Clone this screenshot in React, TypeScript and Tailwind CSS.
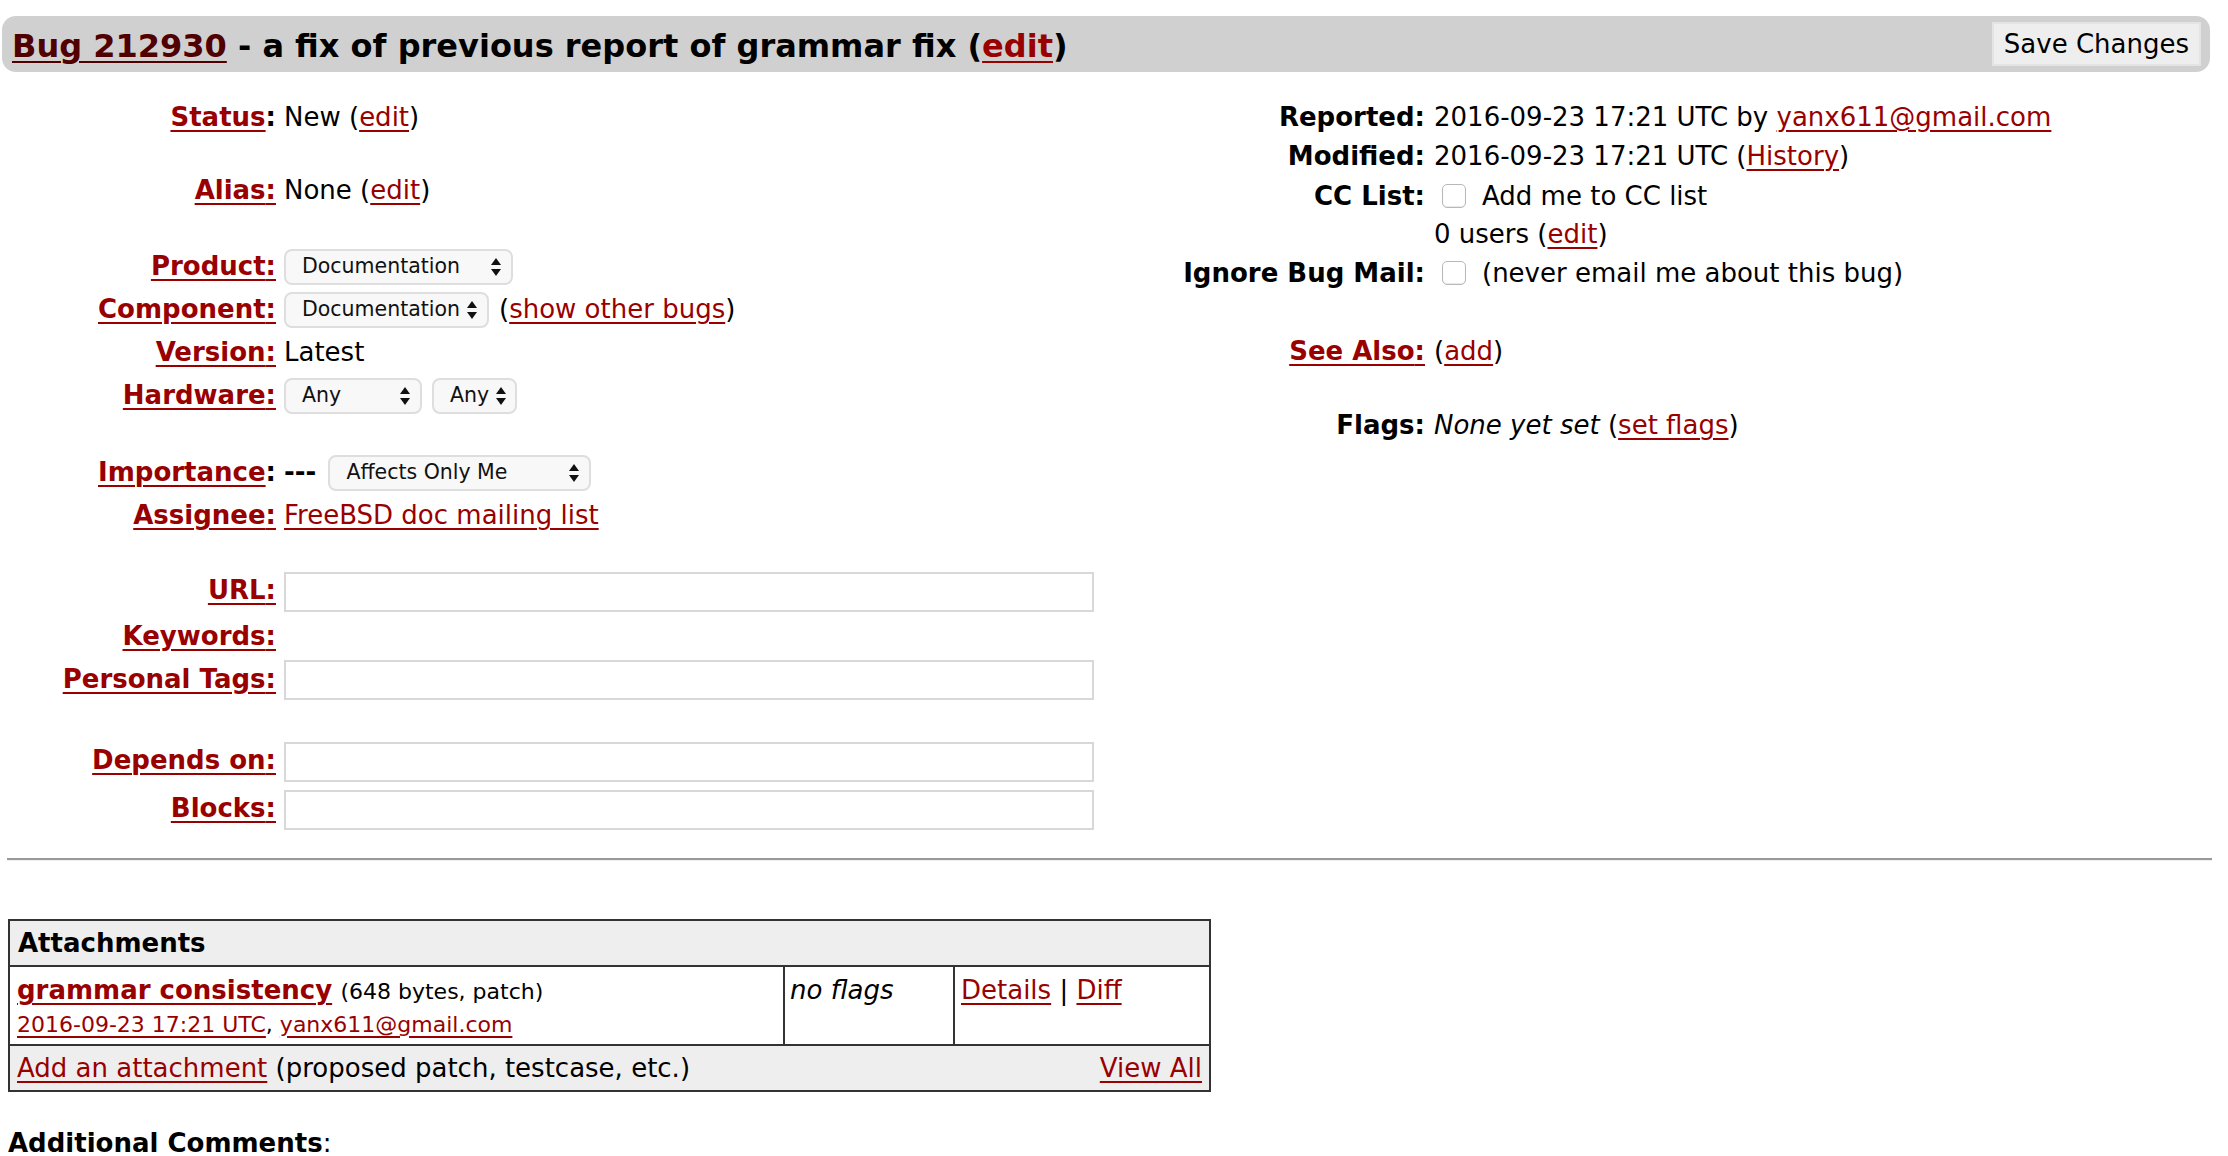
import React from 'react'

const red = 'text-[#990000] underline decoration-2 underline-offset-[4px]'

function Arrows() {
  return (
    <svg width="12" height="20" viewBox="0 0 12 20" className="shrink-0">
      <path d="M6 1 L11 8 H1 Z" fill="#111" />
      <path d="M6 19 L11 12 H1 Z" fill="#111" />
    </svg>
  )
}

function Select({ label, w }: { label: string; w: string }) {
  return (
    <span
      className={`inline-flex h-[36px] items-center justify-between gap-[6px] rounded-[8px] border-2 border-[#dedede] bg-[#f8f8f8] pl-[16px] pr-[9px] text-[20.5px] text-[#111] ${w}`}
    >
      <span>{label}</span>
      <Arrows />
    </span>
  )
}

function TextBox() {
  return <span className="block h-[40px] w-[810px] border-2 border-[#d8d8d8] bg-white" />
}

function Check() {
  return (
    <span className="ml-[8px] inline-block h-[24px] w-[24px] rounded-[5px] border border-[#b8b8b8] bg-white shadow-[inset_0_-1px_1px_#e8e8e8]" />
  )
}

function Row({ label, colon, children, cls }: { label: React.ReactNode; colon?: boolean; children?: React.ReactNode; cls: string }) {
  return (
    <div className={`flex items-center ${cls}`}>
      <div className="w-[276px] shrink-0 whitespace-nowrap text-right font-bold">
        {colon ? (
          <>
            <a className={red}>{label}</a>:
          </>
        ) : (
          <a className={red}>{label}:</a>
        )}
      </div>
      <div className="ml-[8px] flex items-center gap-[10px]">{children}</div>
    </div>
  )
}

function RRow({ label, link, children, cls }: { label: string; link?: boolean; children?: React.ReactNode; cls: string }) {
  return (
    <div className={`flex items-center ${cls}`}>
      <div className="w-[243px] shrink-0 whitespace-nowrap text-right font-bold">
        {link ? <a className={red}>{label}:</a> : <span>{label}:</span>}
      </div>
      <div className="ml-[9px] flex items-center whitespace-nowrap">{children}</div>
    </div>
  )
}

export default function App() {
  return (
    <div className="min-h-screen w-[2228px] bg-white text-[26px] text-black" style={{ fontFamily: '"DejaVu Sans", Verdana, sans-serif' }}>
      <div className="pt-[16px]">
        <div className="ml-[2px] flex h-[56px] w-[2208px] items-center justify-between rounded-[14px] bg-[#d0d0d0] pl-[10px] pr-[9px]">
          <div className="pt-[4px] text-[32px] font-bold">
            <a className="text-[#500000] underline decoration-2 underline-offset-[4px]">Bug 212930</a> - a fix of previous report of grammar fix (
            <a className={red}>edit</a>)
          </div>
          <button className="h-[44px] border-2 border-[#e4e4e4] bg-[#eeeeee] px-[10px] text-[26px]">Save Changes</button>
        </div>
      </div>

      <div className="flex">
        <div className="w-[1182px] shrink-0">
          <Row label="Status" colon cls="mt-[24px] h-[42px]">
            <span>
              New (<a className={red}>edit</a>)
            </span>
          </Row>
          <Row label="Alias" cls="mt-[31px] h-[42px]">
            <span>
              None (<a className={red}>edit</a>)
            </span>
          </Row>
          <Row label="Product" cls="mt-[34px] h-[43px]">
            <Select label="Documentation" w="w-[229px]" />
          </Row>
          <Row label="Component" cls="h-[43px]">
            <Select label="Documentation" w="w-[205px]" />
            <span>
              (<a className={red}>show other bugs</a>)
            </span>
          </Row>
          <Row label="Version" cls="h-[43px]">
            <span>Latest</span>
          </Row>
          <Row label="Hardware" cls="h-[43px]">
            <Select label="Any" w="w-[138px]" />
            <Select label="Any" w="w-[85px]" />
          </Row>
          <Row label="Importance" colon cls="mt-[34px] h-[43px]">
            <span className="mr-[2px] font-bold">---</span>
            <Select label="Affects Only Me" w="w-[263px]" />
          </Row>
          <Row label="Assignee" cls="h-[42px]">
            <a className={red}>FreeBSD doc mailing list</a>
          </Row>
          <Row label="URL" cls="mt-[34px] h-[44px] [&>div:first-child]:-mt-[4px]">
            <TextBox />
          </Row>
          <Row label="Keywords" cls="h-[44px]" />
          <Row label="Personal Tags" cls="h-[44px] [&>div:first-child]:-mt-[2px]">
            <TextBox />
          </Row>
          <Row label="Depends on" cls="mt-[38px] h-[44px] [&>div:first-child]:-mt-[4px]">
            <TextBox />
          </Row>
          <Row label="Blocks" cls="mt-[4px] h-[44px] [&>div:first-child]:-mt-[4px]">
            <TextBox />
          </Row>
        </div>

        <div className="flex-1">
          <RRow label="Reported" cls="mt-[25px] h-[40px]">
            <span>
              2016-09-23 17:21 UTC by <a className={red}>yanx611@gmail.com</a>
            </span>
          </RRow>
          <RRow label="Modified" cls="h-[38px]">
            <span>
              2016-09-23 17:21 UTC (<a className={red}>History</a>)
            </span>
          </RRow>
          <RRow label="CC List" cls="h-[42px]">
            <Check />
            <span className="ml-[16px]">Add me to CC list</span>
          </RRow>
          <div className="flex h-[34px] items-center pl-[252px]">
            <span>
              0 users (<a className={red}>edit</a>)
            </span>
          </div>
          <RRow label="Ignore Bug Mail" cls="h-[44px]">
            <Check />
            <span className="ml-[16px]">(never email me about this bug)</span>
          </RRow>
          <RRow label="See Also" link cls="mt-[36px] h-[40px]">
            <span>
              (<a className={red}>add</a>)
            </span>
          </RRow>
          <RRow label="Flags" cls="mt-[34px] h-[40px]">
            <span>
              <i>None yet set</i> (<a className={red}>set flags</a>)
            </span>
          </RRow>
        </div>
      </div>

      <div className="ml-[7px] mt-[26px] h-[3px] w-[2205px] border-t-2 border-b border-t-[#9a9a9a] border-b-[#eeeeee]" />

      <table className="ml-[8px] mt-[58px] w-[1203px] border-collapse border-2 border-[#333]">
        <tbody>
          <tr className="h-[46px] bg-[#eeeeee]">
            <th colSpan={3} className="border-2 border-[#333] px-[8px] text-left font-bold">
              Attachments
            </th>
          </tr>
          <tr className="h-[79px] align-top">
            <td className="w-[775px] border-2 border-[#333] px-[7px] pt-[7px] leading-[32px]">
              <a className={`${red} font-bold`}>grammar consistency</a> <span className="text-[22px]">(648 bytes, patch)</span>
              <div className="text-[22px] leading-[34px]">
                <a className={red}>2016-09-23 17:21 UTC</a>, <a className={red}>yanx611@gmail.com</a>
              </div>
            </td>
            <td className="w-[170px] border-2 border-[#333] px-[5px] pt-[7px] leading-[32px]">
              <i>no flags</i>
            </td>
            <td className="border-2 border-[#333] px-[6px] pt-[7px] leading-[32px]">
              <a className={red}>Details</a> | <a className={red}>Diff</a>
            </td>
          </tr>
          <tr className="h-[46px] bg-[#eeeeee]">
            <td colSpan={3} className="border-2 border-[#333] px-[7px]">
              <div className="flex justify-between">
                <span>
                  <a className={red}>Add an attachment</a> (proposed patch, testcase, etc.)
                </span>
                <a className={red}>View All</a>
              </div>
            </td>
          </tr>
        </tbody>
      </table>

      <div className="ml-[8px] mt-[32px] font-bold">
        Additional <span className="underline decoration-2 underline-offset-[4px]">C</span>omments<span className="font-normal">:</span>
      </div>
    </div>
  )
}
